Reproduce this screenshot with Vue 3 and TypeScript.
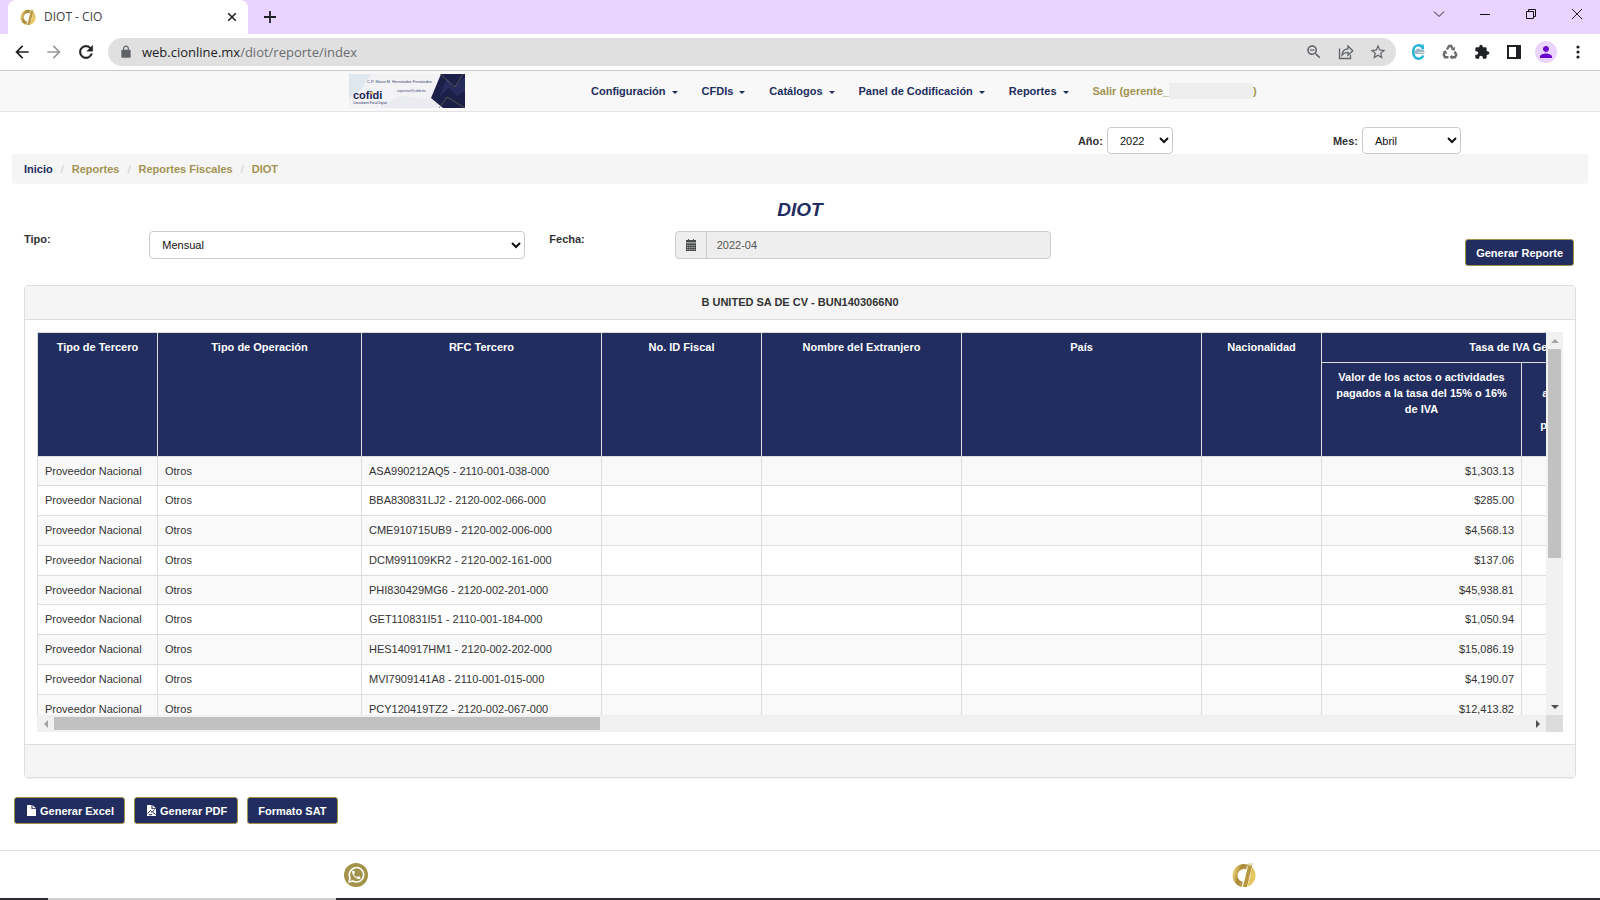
<script setup lang="ts">
import { ref } from 'vue'

interface Row {
  rfc: string
  amount: string
}

const year = ref('2022')
const month = ref('Abril')
const kind = ref('Mensual')
const period = ref('2022-04')

const menus: string[] = ['Configuración', 'CFDIs', 'Catálogos', 'Panel de Codificación', 'Reportes']
const crumbs: string[] = ['Reportes', 'Reportes Fiscales', 'DIOT']
const headings: string[] = [
  'Tipo de Tercero',
  'Tipo de Operación',
  'RFC Tercero',
  'No. ID Fiscal',
  'Nombre del Extranjero',
  'País',
  'Nacionalidad',
]
const rows: Row[] = [
  { rfc: 'ASA990212AQ5 - 2110-001-038-000', amount: '$1,303.13' },
  { rfc: 'BBA830831LJ2 - 2120-002-066-000', amount: '$285.00' },
  { rfc: 'CME910715UB9 - 2120-002-006-000', amount: '$4,568.13' },
  { rfc: 'DCM991109KR2 - 2120-002-161-000', amount: '$137.06' },
  { rfc: 'PHI830429MG6 - 2120-002-201-000', amount: '$45,938.81' },
  { rfc: 'GET110831I51 - 2110-001-184-000', amount: '$1,050.94' },
  { rfc: 'HES140917HM1 - 2120-002-202-000', amount: '$15,086.19' },
  { rfc: 'MVI7909141A8 - 2110-001-015-000', amount: '$4,190.07' },
  { rfc: 'PCY120419TZ2 - 2120-002-067-000', amount: '$12,413.82' },
]
</script>

<template>
  <div class="window">
    <svg class="defs" width="0" height="0" aria-hidden="true">
      <defs>
        <linearGradient id="gold" x1="0" y1="0" x2="1" y2="0.3">
          <stop offset="0" stop-color="#f0d27a" />
          <stop offset="0.35" stop-color="#a98a34" />
          <stop offset="0.6" stop-color="#b8994a" />
          <stop offset="1" stop-color="#e6c65f" />
        </linearGradient>
        <symbol id="cio" viewBox="0 0 24 24">
          <circle cx="12" cy="12.5" r="9" fill="none" stroke="url(#gold)" stroke-width="5" />
          <path d="M15 3.500h1.500L11 24H9.500zM19.500 3.500h.8L15.500 24h-.8z" fill="#fff" />
          <path d="M16.200 2.500h4L14.900 24h-3.900z" fill="#b8983f" />
          <path d="M16.200.6l4.600-.4-.5 2-4.500.3z" fill="#ddd0a0" />
        </symbol>
      </defs>
    </svg>

    <header class="tabs">
      <div class="tab">
        <svg class="i16" viewBox="0 0 24 24"><use href="#cio" /></svg>
        <span class="tab-title">DIOT - CIO</span>
        <button class="bare" aria-label="Cerrar pestaña">
          <svg class="i16" viewBox="0 0 16 16"><path d="M4.200 4.200l7.600 7.600M11.800 4.200l-7.600 7.600" stroke="#202124" stroke-width="1.600" /></svg>
        </button>
      </div>
      <button class="bare plus" aria-label="Nueva pestaña">
        <svg class="i16" viewBox="0 0 16 16"><path d="M8 2v12M2 8h12" stroke="#202124" stroke-width="1.800" /></svg>
      </button>
      <div class="controls">
        <button class="bare" aria-label="Buscar pestañas"><svg class="i16" viewBox="0 0 16 16"><path d="M3 5.500l5 5 5-5" fill="none" stroke="#222" /></svg></button>
        <button class="bare" aria-label="Minimizar"><svg class="i16" viewBox="0 0 16 16"><path d="M3 8.500h10" stroke="#111" /></svg></button>
        <button class="bare" aria-label="Restaurar"><svg class="i16" viewBox="0 0 16 16"><path d="M3.500 5.500h7v7h-7zM5.500 5.500v-2h7v7h-2" fill="none" stroke="#111" /></svg></button>
        <button class="bare" aria-label="Cerrar"><svg class="i16" viewBox="0 0 16 16"><path d="M3 3l10 10M13 3L3 13" stroke="#222" /></svg></button>
      </div>
    </header>

    <div class="toolbar">
      <button class="bare" aria-label="Atrás"><svg class="i20" viewBox="0 0 24 24" fill="#202124"><path d="M20 11H7.830l5.590-5.590L12 4l-8 8 8 8 1.410-1.410L7.830 13H20v-2z" /></svg></button>
      <button class="bare" aria-label="Adelante"><svg class="i20" viewBox="0 0 24 24" fill="#9a9a9a"><path d="M12 4l-1.410 1.410L16.170 11H4v2h12.170l-5.580 5.590L12 20l8-8z" /></svg></button>
      <button class="bare" aria-label="Recargar"><svg class="i20" viewBox="0 0 24 24" fill="#202124" stroke="#202124" stroke-width=".5"><path d="M17.650 6.350C16.200 4.900 14.210 4 12 4c-4.420 0-7.990 3.580-7.990 8s3.570 8 7.990 8c3.730 0 6.840-2.550 7.730-6h-2.080c-.82 2.330-3.040 4-5.650 4-3.310 0-6-2.690-6-6s2.690-6 6-6c1.660 0 3.140.69 4.220 1.780L13 11h7V4l-2.350 2.350z" /></svg></button>
      <div class="omnibox">
        <svg class="i14" viewBox="0 0 24 24" fill="#5f6368"><path d="M18 8h-1V6c0-2.760-2.240-5-5-5S7 3.240 7 6v2H6c-1.100 0-2 .9-2 2v10c0 1.100.9 2 2 2h12c1.100 0 2-.9 2-2V10c0-1.100-.9-2-2-2zM9 6c0-1.660 1.340-3 3-3s3 1.340 3 3v2H9V6z" /></svg>
        <div class="url" role="textbox" aria-label="Dirección" tabindex="0">web.cionline.mx<span>/diot/reporte/index</span></div>
        <button class="bare" aria-label="Zoom"><svg class="i18" viewBox="0 0 24 24" fill="#5f6368"><path d="M15.500 14h-.79l-.28-.27C15.410 12.590 16 11.110 16 9.500 16 5.910 13.090 3 9.500 3S3 5.910 3 9.500 5.910 16 9.500 16c1.610 0 3.090-.59 4.230-1.570l.27.28v.79l5 4.990L20.490 19l-4.990-5zm-6 0C7.010 14 5 11.990 5 9.500S7.010 5 9.500 5 14 7.010 14 9.500 11.990 14 9.500 14zM6.500 8.700h6v1.600h-6z" /></svg></button>
        <button class="bare" aria-label="Compartir"><svg class="i18" viewBox="0 0 18 18" fill="none" stroke="#5f6368" stroke-width="1.300"><path d="M2.500 5.500v10h11v-3.500M5 12c.4-4 2.600-6 6-6.100V3l4.800 4.700L11 12.200V9.400C8.300 9.300 6.500 10.200 5 12z" /></svg></button>
        <button class="bare" aria-label="Marcar"><svg class="i18" viewBox="0 0 24 24" fill="#5f6368"><path d="M22 9.240l-7.190-.62L12 2 9.190 8.630 2 9.240l5.460 4.730L5.820 21 12 17.270 18.180 21l-1.630-7.030L22 9.240zM12 15.400l-3.760 2.270 1-4.280-3.320-2.880 4.380-.38L12 6.100l1.710 4.040 4.380.38-3.320 2.880 1 4.280L12 15.400z" /></svg></button>
      </div>
      <div class="extensions">
        <button class="bare" aria-label="Extensión C">
          <svg class="i16" viewBox="0 0 16 16"><path d="M13 5C12.500 2.500 11 1.300 8.800 1.300 5 1.300 3.200 4.500 3.200 8s2 6.700 5.600 6.700c2.200 0 3.700-1.200 4.300-3.200" fill="none" stroke="#27b3d4" stroke-width="2.600" /><path d="M13 .5v5" stroke="#27b3d4" stroke-width="1.500" /><path d="M5.500 10a2 2 0 0 1 .4-3.800 2.700 2.700 0 0 1 5-.2 2.200 2.200 0 0 1 3.500 2.200c0 1.200-.8 1.900-2 1.900z" fill="#9db4c4" /><path d="M8 8.500h6" stroke="#d6e5ec" /></svg>
        </button>
        <button class="bare" aria-label="Reciclar">
          <svg class="i16" viewBox="0 0 16 16" fill="none" stroke="#6b6b6b" stroke-width="2.400"><path d="M5 5.500L7 2h2.200l1.400 2.600M12.600 7.600l1.700 3.200-1.200 2.400H9.600M6.500 13.200H3L1.700 10.800l1.600-3" /><path d="M8.700 6l4 .6.500-3.800zM10.300 10.500v5L7.500 13zM.3 8l3.600-1.800L5.300 10z" fill="#6b6b6b" stroke="none" /></svg>
        </button>
        <button class="bare" aria-label="Extensiones"><svg class="i16" viewBox="0 0 24 24" fill="#202124"><path d="M20.500 11H19V7c0-1.100-.9-2-2-2h-4V3.500C13 2.120 11.880 1 10.500 1S8 2.120 8 3.500V5H4c-1.100 0-1.990.9-1.990 2v3.800H3.500c1.490 0 2.700 1.210 2.700 2.700s-1.210 2.700-2.700 2.700H2V20c0 1.100.9 2 2 2h3.800v-1.500c0-1.490 1.210-2.700 2.700-2.700 1.490 0 2.700 1.210 2.700 2.700V22H17c1.100 0 2-.9 2-2v-4h1.500c1.380 0 2.500-1.120 2.500-2.500S21.880 11 20.500 11z" /></svg></button>
        <button class="bare" aria-label="Panel lateral"><svg class="i16" viewBox="0 0 16 16"><path d="M1 1h14v14H1zM3 3v10h7V3z" fill="#202124" fill-rule="evenodd" /></svg></button>
        <button class="bare" aria-label="Perfil"><span class="avatar"><svg class="i18" viewBox="0 0 24 24" fill="#6a05c9"><path d="M12 12c2.210 0 4-1.790 4-4s-1.790-4-4-4-4 1.790-4 4 1.790 4 4 4zm0 2c-2.670 0-8 1.340-8 4v2h16v-2c0-2.660-5.330-4-8-4z" /></svg></span></button>
        <button class="bare" aria-label="Menú"><svg class="i16" viewBox="0 0 16 16" fill="#202124"><circle cx="8" cy="3" r="1.600" /><circle cx="8" cy="8" r="1.600" /><circle cx="8" cy="13" r="1.600" /></svg></button>
      </div>
    </div>

    <nav class="navbar">
      <a class="brand" href="#" aria-label="cofidi">
        <svg viewBox="0 0 116 34">
          <rect width="116" height="34" fill="#f3f3f6" />
          <path d="M0 0h22L12 16 0 24z" fill="#e0e8ef" />
          <path d="M30 34l20-12 40 4v8z" fill="#ebecf0" />
          <path d="M92 0h24v34H94L82 24z" fill="#1b2048" />
          <path d="M98 4l6 9 12-10v14l-8 5-8-8-10 9z" fill="#262c5c" />
          <path d="M91 0l15 13 8-13M90 34l8-11 18 11" fill="none" stroke="#6b6458" stroke-width=".7" />
          <text x="18" y="9" font-size="4" fill="#3a4272">C.P. Mario M. Hernández Fernández</text>
          <text x="48" y="18" font-size="3" fill="#3a4272">supervisor@cofidi.mx</text>
          <text x="4" y="25" font-size="11" font-weight="bold" fill="#1d2758">cofidi</text>
          <circle cx="23" cy="19" r="1.500" fill="#d8bb60" />
          <text x="4" y="30" font-size="3" fill="#1d2758">Consultores Fiscal Digital</text>
        </svg>
      </a>
      <ul class="menu">
        <li v-for="m in menus" :key="m">
          <button class="menu-item">{{ m }}<i class="caret"></i></button>
        </li>
        <li><a class="logout" href="#">Salir (gerente_<span class="mask"></span>)</a></li>
      </ul>
    </nav>

    <main class="page">
      <div class="period">
        <div class="pair">
          <label for="year">Año:</label>
          <select id="year" v-model="year" class="field year"><option>2022</option></select>
        </div>
        <div class="pair">
          <label for="month">Mes:</label>
          <select id="month" v-model="month" class="field month"><option>Abril</option></select>
        </div>
      </div>

      <ol class="breadcrumb">
        <li><a class="home" href="#">Inicio</a></li>
        <li v-for="c in crumbs" :key="c"><a href="#">{{ c }}</a></li>
      </ol>

      <h1>DIOT</h1>

      <form class="filters" @submit.prevent>
        <div class="filter">
          <label for="kind">Tipo:</label>
          <select id="kind" v-model="kind" class="field"><option>Mensual</option></select>
        </div>
        <div class="filter">
          <label for="date">Fecha:</label>
          <div class="group">
            <span class="addon">
              <svg class="i12" viewBox="0 0 12 12"><path d="M1 1h2V0h1v1h4V0h1v1h2v2.500H1zM1 4.300h10V12H1z" fill="#484c4c" /><path d="M2 6.500h8M2 8.500h8M2 10.500h8" stroke="#eee" stroke-width=".6" stroke-dasharray="1.400 .8" /></svg>
            </span>
            <input id="date" v-model="period" type="text" readonly />
          </div>
        </div>
        <div class="action"><button class="btn" type="submit">Generar Reporte</button></div>
      </form>

      <section class="panel">
        <h2>B UNITED SA DE CV - BUN1403066N0</h2>
        <div class="panel-body">
          <div class="scroller">
            <div class="viewport">
              <table>
                <colgroup>
                  <col class="w120" /><col class="w204" /><col class="w240" /><col class="w160" /><col class="w200" />
                  <col class="w240" /><col class="w120" /><col class="w200" /><col class="w200" />
                </colgroup>
                <thead>
                  <tr class="group-row">
                    <th v-for="h in headings" :key="h" rowspan="2">{{ h }}</th>
                    <th colspan="2">Tasa de IVA General</th>
                  </tr>
                  <tr class="sub-row">
                    <th>Valor de los actos o actividades pagados a la tasa del 15% o 16% de IVA</th>
                    <th>Monto del IVA pagado no<br />acreditable a la tasa del 15% o<br />16% (correspondiente a la<br />proporción de las deducciones<br />autorizadas)</th>
                  </tr>
                </thead>
                <tbody>
                  <tr v-for="r in rows" :key="r.rfc">
                    <td>Proveedor Nacional</td>
                    <td>Otros</td>
                    <td>{{ r.rfc }}</td>
                    <td></td><td></td><td></td><td></td>
                    <td class="num">{{ r.amount }}</td>
                    <td></td>
                  </tr>
                </tbody>
              </table>
            </div>
            <div class="bar vertical">
              <span class="arrow"><i class="up"></i></span>
              <div class="track"><div class="thumb"></div></div>
              <span class="arrow"><i class="down"></i></span>
            </div>
            <div class="bar horizontal">
              <span class="arrow"><i class="left"></i></span>
              <div class="track"><div class="thumb"></div></div>
              <span class="arrow"><i class="right"></i></span>
            </div>
            <div class="corner"></div>
          </div>
        </div>
        <div class="panel-footer"></div>
      </section>

      <div class="exports">
        <button class="btn">
          <svg class="i12" viewBox="0 0 12 12" fill="#fff"><path d="M2 0h4.500v4H11v7H2zM7.500 0L11 3.200H7.500z" /></svg>
          Generar Excel
        </button>
        <button class="btn">
          <svg class="i12" viewBox="0 0 12 12"><path d="M2 0h4.500v4H11v7H2zM7.500 0L11 3.200H7.500z" fill="#fff" /><path d="M2.500 8.500l3-3 1.500 2 2.500-3M8 7.500l2.500 2M4 9.700h3" stroke="#212c5f" stroke-width="1" fill="none" /></svg>
          Generar PDF
        </button>
        <button class="btn">Formato SAT</button>
      </div>
    </main>

    <footer class="footer">
      <a href="#" aria-label="WhatsApp">
        <svg class="i24" viewBox="0 0 24 24"><circle cx="12" cy="12" r="12" fill="#a3924a" /><path d="M5 19l1.100-3.800A7.200 7.200 0 1 1 8.800 18z" fill="none" stroke="#fff" stroke-width="1.500" stroke-linejoin="round" /><path transform="translate(6.700 6.300) scale(.46)" d="M6.620 10.790c1.440 2.830 3.760 5.140 6.590 6.590l2.200-2.200c.27-.27.67-.36 1.020-.24 1.120.37 2.330.57 3.570.57.55 0 1 .45 1 1V20c0 .55-.45 1-1 1-9.390 0-17-7.610-17-17 0-.55.45-1 1-1h3.500c.55 0 1 .45 1 1 0 1.250.2 2.450.57 3.570.11.35.03.74-.25 1.020l-2.200 2.200z" fill="#fff" /></svg>
      </a>
      <span></span>
      <a href="#" aria-label="CIO"><svg class="i24" viewBox="0 0 24 24"><use href="#cio" /></svg></a>
    </footer>
    <div class="taskbar"><span class="active"></span></div>
  </div>
</template>

<style>
body {
  margin: 0;
}
</style>

<style scoped>
* {
  box-sizing: border-box;
}
.window {
  display: flex;
  flex-direction: column;
  min-height: 100vh;
  background: #fff;
  color: #333;
  font-family: "Liberation Sans", Arial, sans-serif;
  font-size: 11px;
  line-height: 16px;
}
.defs {
  position: absolute;
}
svg {
  display: block;
  flex: none;
}
.i12 { width: 12px; height: 12px; }
.i14 { width: 14px; height: 14px; }
.i16 { width: 16px; height: 16px; }
.i18 { width: 18px; height: 18px; }
.i20 { width: 20px; height: 20px; }
.i24 { width: 24px; height: 24px; }
button,
select,
input {
  font: inherit;
}
a {
  color: #a29352;
  text-decoration: none;
}
.bare {
  display: flex;
  align-items: center;
  justify-content: center;
  padding: 0;
  border: 0;
  background: none;
}

/* window frame */
.tabs {
  display: flex;
  height: 34px;
  padding-left: 8px;
  background: #e8d4ff;
}
.tab {
  display: flex;
  align-items: center;
  width: 240px;
  padding: 0 8px 0 12px;
  border-radius: 8px 8px 0 0;
  background: #fff;
}
.tab-title {
  flex: 1;
  padding-left: 8px;
  color: #3c4043;
  font-family: "Open Sans", "Noto Sans", sans-serif;
  font-size: 12px;
}
.plus {
  width: 44px;
}
.controls {
  display: flex;
  height: 28px;
  margin-left: auto;
}
.controls .bare {
  width: 46px;
}
.toolbar {
  display: flex;
  align-items: center;
  height: 37px;
  padding: 0 6px;
  border-bottom: 1px solid #cacaca;
}
.toolbar .bare {
  width: 32px;
  height: 28px;
}
.omnibox {
  display: flex;
  flex: 1;
  align-items: center;
  height: 28px;
  margin: 0 6px;
  padding: 0 2px 0 11px;
  border-radius: 14px;
  background: #e0e0e0;
}
.url {
  flex: 1;
  padding-left: 9px;
  color: #202124;
  font-family: "Open Sans", "Noto Sans", sans-serif;
  font-size: 13px;
}
.url span {
  color: #6a6d70;
}
.extensions {
  display: flex;
}
.avatar {
  display: flex;
  align-items: center;
  justify-content: center;
  width: 22px;
  height: 22px;
  border-radius: 50%;
  background: #e8d4ff;
}

/* site navigation */
.navbar {
  display: flex;
  align-items: center;
  height: 41px;
  padding-left: 349px;
  border-bottom: 1px solid #e3e3e3;
  background: #f8f8f8;
}
.brand svg {
  width: 116px;
  height: 34px;
}
.menu {
  display: flex;
  gap: 24px;
  margin: 0 0 0 126px;
  padding: 0;
  font-weight: bold;
  list-style: none;
}
.menu-item {
  display: flex;
  align-items: center;
  padding: 0;
  border: 0;
  background: none;
  color: #212c5f;
}
.caret {
  margin: 2px 0 0 6px;
  border: 3px solid transparent;
  border-top-color: #212c5f;
  border-bottom: 0;
}
.logout {
  display: flex;
}
.mask {
  width: 84px;
  background: #eee;
}

/* page */
.page {
  flex: 1;
  padding: 15px 12px 0;
}
.period {
  display: flex;
  justify-content: flex-end;
  gap: 160px;
  padding-right: 127px;
}
.pair {
  display: flex;
  align-items: center;
  gap: 4px;
}
label {
  font-weight: bold;
}
.field {
  height: 27px;
  padding: 0 8px;
  border: 1px solid #ccc;
  border-radius: 4px;
  background: #fff;
  color: #111;
}
.year { width: 66px; }
.month { width: 99px; }
.breadcrumb {
  display: flex;
  height: 30px;
  margin: 0;
  padding: 7px 12px;
  border-radius: 4px;
  background: #f5f5f5;
  font-weight: bold;
  list-style: none;
}
.breadcrumb li + li::before {
  content: "/";
  padding: 0 8px;
  color: #ccc;
  font-weight: normal;
}
.breadcrumb .home {
  color: #212c5f;
}
h1 {
  margin: 14px 0 9px;
  color: #212c5f;
  font-size: 19px;
  font-style: italic;
  line-height: 24px;
  text-align: center;
}
.filters {
  display: grid;
  grid-template-columns: repeat(3, 1fr);
  gap: 24px;
  height: 54px;
  padding: 0 12px;
}
.filter {
  display: grid;
  grid-template-columns: 1fr 3fr;
  align-items: start;
}
.filter .field,
.group {
  height: 28px;
}
.group {
  display: flex;
  border: 1px solid #ccc;
  border-radius: 4px;
  background: #eee;
}
.addon {
  display: flex;
  align-items: center;
  justify-content: center;
  width: 31px;
  border-right: 1px solid #ccc;
}
.group input {
  flex: 1;
  min-width: 0;
  padding: 0 10px;
  border: 0;
  background: none;
  color: #555;
}
.action {
  display: flex;
  align-items: flex-start;
  justify-content: flex-end;
  padding: 8px 2px 0 0;
}
.btn {
  display: flex;
  align-items: center;
  gap: 3px;
  height: 27px;
  padding: 0 10px;
  border: 1px solid #a3924a;
  border-radius: 3px;
  background: #212c5f;
  color: #fff;
  font-weight: bold;
}

/* report panel */
.panel {
  margin: 0 12px;
  border: 1px solid #ddd;
  border-radius: 4px;
  box-shadow: 0 1px 1px rgba(0, 0, 0, 0.05);
}
h2 {
  margin: 0;
  padding: 8px 9px 9px;
  border-bottom: 1px solid #ddd;
  background: #f5f5f5;
  font-size: 11px;
  text-align: center;
}
.panel-body {
  padding: 12px;
}
.panel-footer {
  height: 33px;
  border-top: 1px solid #ddd;
  background: #f5f5f5;
}
.scroller {
  display: grid;
  grid-template: 383px 17px / minmax(0, 1fr) 17px;
}
.viewport {
  overflow: auto;
  scrollbar-width: none;
}
table {
  width: 1684px;
  border-collapse: collapse;
  table-layout: fixed;
}
.w120 { width: 120px; }
.w160 { width: 160px; }
.w200 { width: 200px; }
.w204 { width: 204px; }
.w240 { width: 240px; }
th,
td {
  padding: 6px 7px;
  border: 1px solid #ddd;
  vertical-align: top;
}
th {
  background: #212c5f;
  color: #fff;
}
.group-row { height: 30px; }
.sub-row { height: 94px; }
tbody tr {
  height: 30px;
}
tbody tr:nth-child(4n + 1) {
  height: 29px;
}
tbody tr:nth-child(odd) {
  background: #f9f9f9;
}
.num {
  text-align: right;
}
.bar {
  display: flex;
  background: #f1f1f1;
}
.vertical {
  flex-direction: column;
}
.arrow {
  display: flex;
  align-items: center;
  justify-content: center;
  width: 17px;
  height: 17px;
}
.arrow i {
  border: 4px solid transparent;
}
.arrow .up { border-top: 0; border-bottom-color: #a3a3a3; }
.arrow .down { border-bottom: 0; border-top-color: #505050; }
.arrow .left { border-left: 0; border-right-color: #a3a3a3; }
.arrow .right { border-right: 0; border-left-color: #505050; }
.track {
  flex: 1;
}
.thumb {
  background: #c1c1c1;
}
.vertical .thumb {
  width: 13px;
  height: 60%;
  margin: 0 2px;
}
.horizontal .thumb {
  width: 37%;
  height: 13px;
  margin: 2px 0;
}
.corner {
  background: #dcdcdc;
}
.exports {
  display: flex;
  gap: 9px;
  padding: 19px 2px 26px;
}

/* footer */
.footer {
  display: grid;
  grid-template-columns: 4fr 1fr 4fr;
  place-items: center;
  height: 48px;
  border-top: 1px solid #ddd;
}
.taskbar {
  height: 2px;
  padding-left: 48px;
  background: #2b2b30;
}
.active {
  display: block;
  width: 288px;
  height: 2px;
  background: #d0d0d0;
}
</style>
